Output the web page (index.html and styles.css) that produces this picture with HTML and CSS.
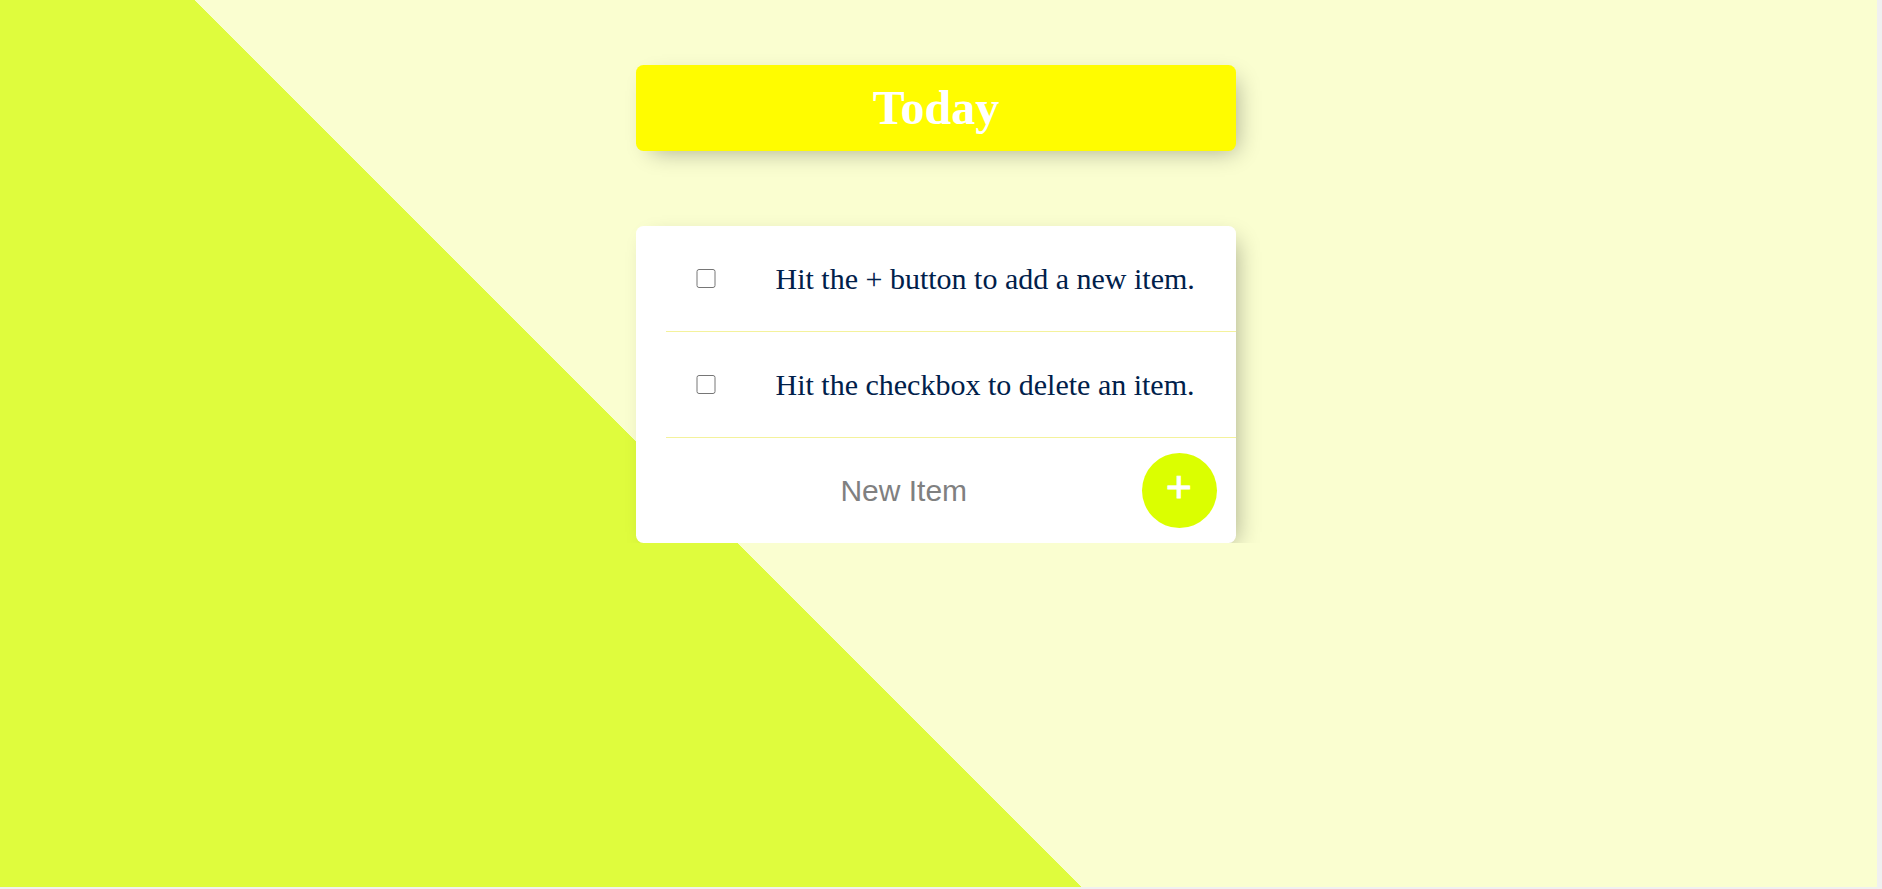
FILE: index.html
```html
<!DOCTYPE html>
<html lang="en">
<head>
  <meta charset="utf-8">
  <title>Today</title>
  <link rel="stylesheet" href="styles.css">
</head>
<body>
  <div class="box heading">
    <h1>Today</h1>
  </div>
  <div class="box list">
    <form class="item-form">
      <div class="item">
        <input type="checkbox" class="check">
        <p class="item-text">Hit the + button to add a new item.</p>
      </div>
    </form>
    <form class="item-form">
      <div class="item">
        <input type="checkbox" class="check">
        <p class="item-text">Hit the checkbox to delete an item.</p>
      </div>
    </form>
    <form class="item-form item new-item">
      <input type="text" class="new-input" placeholder="New Item" autocomplete="off">
      <button type="button" class="add-btn">+</button>
    </form>
  </div>
</body>
</html>
```

FILE: styles.css
```css
html {
  background-color: #f0f0f0;
  background-image: linear-gradient(45deg, #dffc3d 765px, #fafed0 765px);
  background-repeat: no-repeat;
  background-size: 1877px 887px;
  overflow: hidden;
}

body {
  margin: 0;
  padding: 65px 10px 0 0;
  font-family: "Liberation Serif", "Times New Roman", serif;
  font-size: 24px;
}

.box {
  width: 600px;
  margin: 0 auto;
  background: #ffffff;
  border-radius: 7.5px;
  box-shadow: 7.5px 7.5px 22.5px -7.5px rgba(0, 0, 0, 0.33);
}

.heading {
  background: #fffc00;
  text-align: center;
  margin-bottom: 75px;
}

.heading h1 {
  margin: 0;
  padding: 15px;
  font-size: 48px;
  line-height: 56px;
  font-weight: bold;
  color: #ffffff;
}

.item-form {
  margin: 0 0 0 30px;
  text-align: center;
}

.item {
  min-height: 105px;
  display: flex;
  align-items: center;
  border-bottom: 1.5px solid #f4f29c;
}

.new-item {
  border-bottom: 0;
}

.check {
  margin: 30px;
  width: 19.5px;
  height: 19.5px;
  flex-shrink: 0;
}

.item-text {
  margin: 0;
  padding: 30px;
  font-size: 30px;
  font-weight: 200;
  color: #00204a;
}

.new-input {
  text-align: center;
  height: 90px;
  width: 469.5px;
  padding: 1.5px 3px;
  border: none;
  background: transparent;
  font-family: "Liberation Sans", Arial, sans-serif;
  font-size: 30px;
  font-weight: 200;
  color: #000;
  outline: none;
}

.new-input::placeholder {
  color: grey;
  opacity: 1;
}

.add-btn {
  box-sizing: border-box;
  min-height: 75px;
  width: 75px;
  border-radius: 50%;
  border: 0;
  background-color: #dbff00;
  color: #ffffff;
  font-family: "Liberation Sans", Arial, sans-serif;
  font-size: 45px;
  -webkit-text-stroke: 0.8px #ffffff;
  padding: 1.5px 9px 9px 9px;
  flex-shrink: 0;
}
```
